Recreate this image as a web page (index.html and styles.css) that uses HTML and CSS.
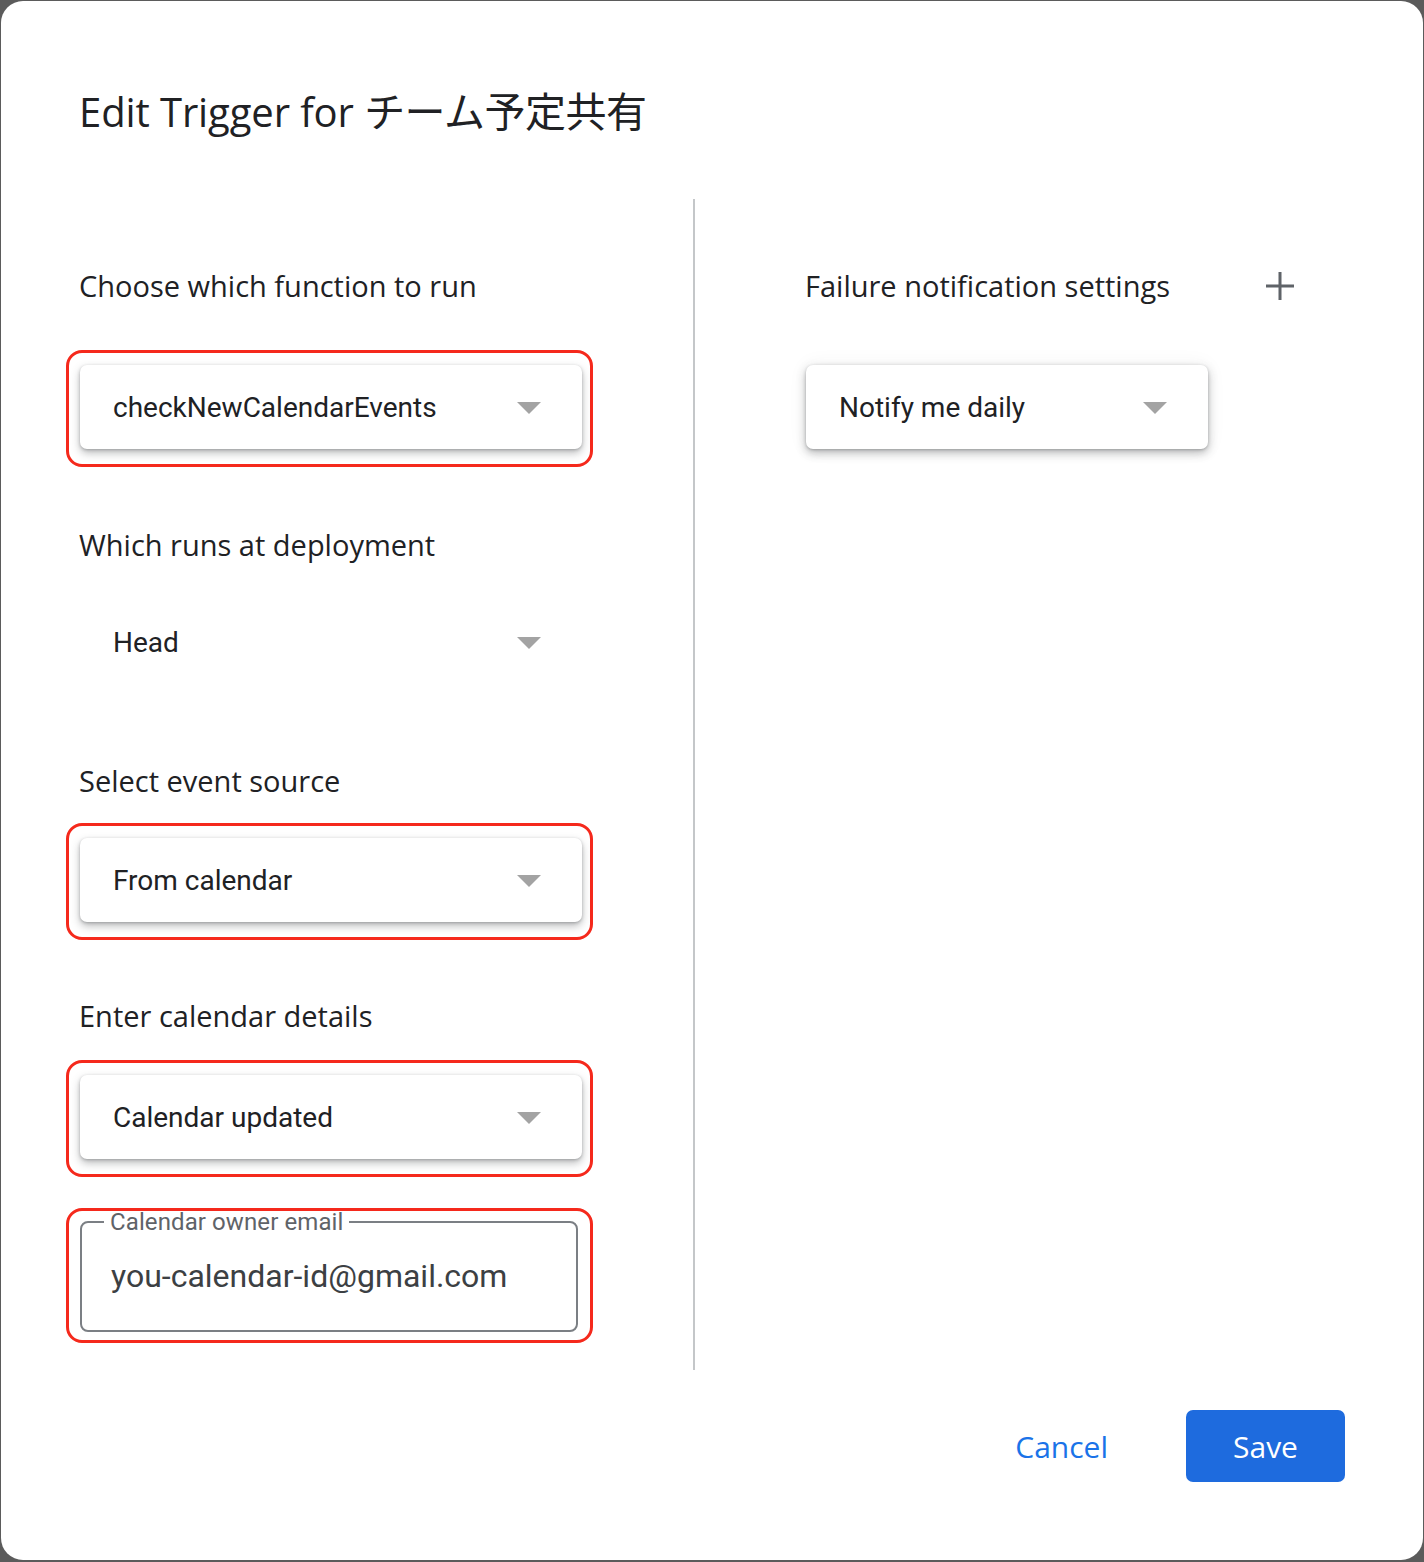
FILE: index.html
```html
<!DOCTYPE html>
<html lang="en">
<head>
<meta charset="utf-8">
<title>Edit Trigger</title>
<link rel="stylesheet" href="styles.css">
</head>
<body>
<div class="dialog">
  <h1 class="title">Edit Trigger for <span class="jp">チーム予定共有</span></h1>
  <div class="columns">
    <div class="col-left">
      <div class="label l1">Choose which function to run</div>
      <div class="hl hl1">
        <div class="select card"><span>checkNewCalendarEvents</span><i class="arrow"></i></div>
      </div>
      <div class="label l2">Which runs at deployment</div>
      <div class="select plain"><span>Head</span><i class="arrow"></i></div>
      <div class="label l3">Select event source</div>
      <div class="hl hl2">
        <div class="select card"><span>From calendar</span><i class="arrow"></i></div>
      </div>
      <div class="label l4">Enter calendar details</div>
      <div class="hl hl3">
        <div class="select card"><span>Calendar updated</span><i class="arrow"></i></div>
      </div>
      <div class="hl hl4">
        <fieldset class="outlined">
          <legend>Calendar owner email</legend>
          <div class="value">you-calendar-id@gmail.com</div>
        </fieldset>
      </div>
    </div>
    <div class="divider"></div>
    <div class="col-right">
      <div class="right-head">
        <div class="label">Failure notification settings</div>
        <svg class="plus" width="30" height="30" viewBox="0 0 30 30"><path d="M15 1v28M1 15h28" stroke="#5f6368" stroke-width="3" fill="none"/></svg>
      </div>
      <div class="select card narrow"><span>Notify me daily</span><i class="arrow"></i></div>
    </div>
  </div>
  <div class="footer">
    <button class="btn-text">Cancel</button>
    <button class="btn-primary">Save</button>
  </div>
</div>
</body>
</html>
```

FILE: styles.css
```css
html, body {
  margin: 0;
  padding: 0;
  background: #5b5b5b;
}
body {
  width: 1424px;
  height: 1562px;
  overflow: hidden;
  font-family: "Open Sans", "Noto Sans CJK JP", sans-serif;
  color: #202124;
}
.dialog {
  box-sizing: border-box;
  margin: 1px 1px 2px 1px;
  width: 1422px;
  height: 1559px;
  background: #fff;
  border-radius: 22px;
  padding: 0 78px 0 79px;
  display: flex;
  flex-direction: column;
}
.title {
  margin: 81px 0 0 -1px;
  height: 54px;
  line-height: 54px;
  font-size: 40px;
  font-weight: 500;
  letter-spacing: -0.1px;
  color: #202124;
  white-space: nowrap;
}
.title .jp {
  font-family: "Noto Sans CJK JP", sans-serif;
  font-weight: 400;
  font-size: 41px;
  letter-spacing: -0.5px;
}
.columns {
  margin-top: 63px;
  display: flex;
  height: 1171px;
}
.col-left {
  width: 613px;
  display: flex;
  flex-direction: column;
}
.divider {
  width: 2px;
  background: #c4c7c9;
  height: 1171px;
}
.col-right {
  padding-left: 111px;
  display: flex;
  flex-direction: column;
}
.label {
  font-size: 29px;
  line-height: 40px;
  height: 40px;
  color: #202124;
  white-space: nowrap;
  margin-left: -1px;
}
.l1 { margin-top: 67px; }
.hl {
  box-sizing: border-box;
  width: 527px;
  margin-left: -14px;
  border: 3px solid #f5291c;
  border-radius: 16px;
  padding: 12px 8px 15px 11px;
}
.hl1 { margin-top: 44px; }
.l2 { margin-top: 58px; }
.l3 { margin-top: 77px; }
.hl2 { margin-top: 22px; }
.l4 { margin-top: 56px; }
.hl3 { margin-top: 24px; }
.hl4 { margin-top: 31px; padding: 0 12px 8px 11px; }
.select {
  box-sizing: border-box;
  width: 502px;
  height: 84px;
  display: flex;
  align-items: center;
  justify-content: space-between;
  padding: 0 41px 0 33px;
  font-family: Roboto, "Noto Sans", sans-serif;
  font-size: 28px;
  color: #202124;
}
.plain { margin-top: 35px; }
.card {
  background: #fff;
  border-radius: 7px;
  box-shadow: 0 4px 8px rgba(60, 64, 67, 0.35), 0 1px 3px rgba(60, 64, 67, 0.3);
}
.narrow {
  width: 402px;
  margin-top: 59px;
  box-shadow: 0 4px 10px rgba(60, 64, 67, 0.35), 0 1px 3px rgba(60, 64, 67, 0.3), 0 0 20px rgba(60, 64, 67, 0.06);
}
.arrow {
  width: 0;
  height: 0;
  border-left: 12px solid transparent;
  border-right: 12px solid transparent;
  border-top: 12px solid #a3a3a3;
  margin-top: 2px;
}
.right-head {
  margin-top: 67px;
  width: 490px;
  display: flex;
  align-items: center;
  justify-content: space-between;
}
.plus { margin-right: 1px; }
.outlined {
  box-sizing: border-box;
  margin: 0;
  width: 498px;
  height: 121px;
  border: 2px solid #7b7f84;
  border-radius: 8px;
  padding: 0 0 0 29px;
  min-width: 0;
}
.outlined legend {
  margin-left: -7px;
  padding: 0 6px;
  font-family: Roboto, "Noto Sans", sans-serif;
  font-size: 24px;
  line-height: 22px;
  letter-spacing: 0.1px;
  color: #5f6368;
}
.outlined .value {
  font-family: Roboto, "Noto Sans", sans-serif;
  font-size: 32px;
  line-height: 40px;
  color: #3c4043;
  margin-top: 23px;
}
.footer {
  margin-top: 40px;
  display: flex;
  justify-content: flex-end;
  align-items: center;
}
.btn-text {
  border: 0;
  background: none;
  font-family: "Open Sans", sans-serif;
  font-size: 30px;
  font-weight: 500;
  color: #1a73e8;
  padding: 0;
  margin-right: 78px;
}
.btn-primary {
  border: 0;
  width: 159px;
  height: 72px;
  border-radius: 7px;
  background: #1e6bde;
  color: #fff;
  font-family: "Open Sans", sans-serif;
  font-size: 30px;
  font-weight: 500;
}
```
